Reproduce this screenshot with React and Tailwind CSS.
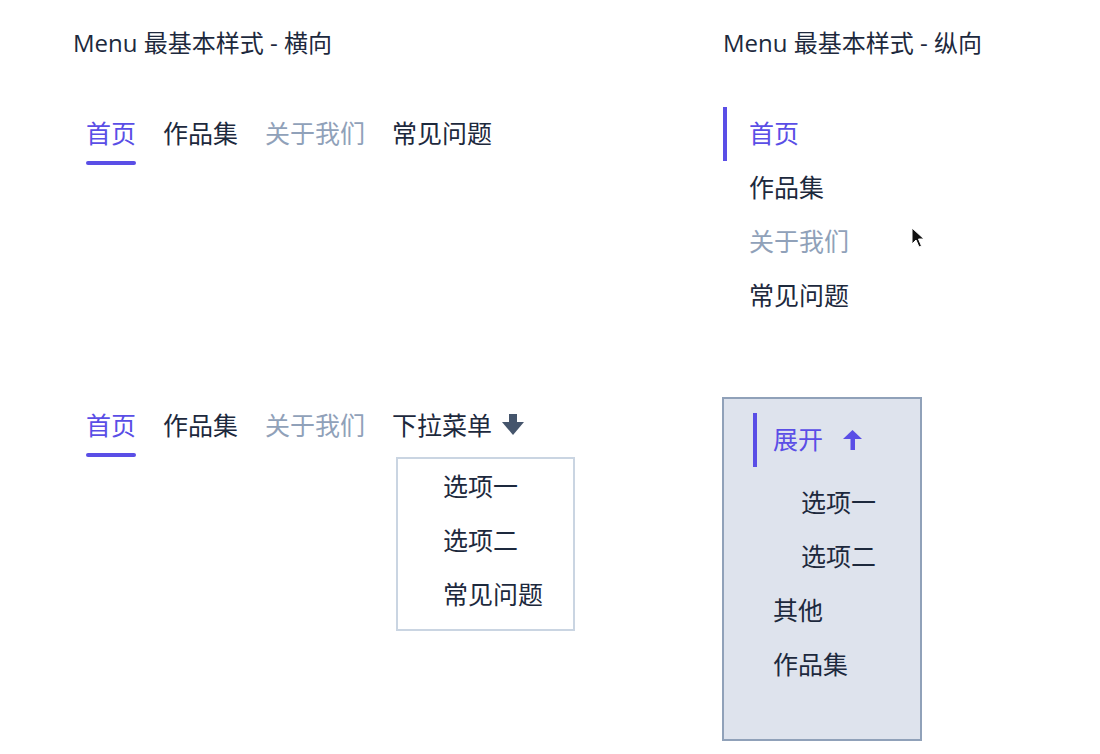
import React from 'react';

const FONT = { fontFamily: 'Lato, "Noto Sans CJK SC", sans-serif' };
const TITLE_FONT = { fontFamily: '"Open Sans", "Noto Sans CJK SC", sans-serif' };

const items = [
  { label: '首页', active: true },
  { label: '作品集' },
  { label: '关于我们', disabled: true },
];

const ArrowDown = () => (
  <svg width="22" height="22" viewBox="0 0 22 22" className="text-slate-600">
    <rect x="7" y="0" width="8" height="10" fill="currentColor" />
    <polygon points="0,8 22,8 11,21" fill="currentColor" />
  </svg>
);

const ArrowUp = () => (
  <svg width="19" height="20" viewBox="0 0 19 20" className="text-[#5a4ee6]">
    <polygon points="9.5,0 19,9 0,9" fill="currentColor" />
    <rect x="7.5" y="8" width="4.5" height="12" fill="currentColor" />
  </svg>
);

const Cursor = () => (
  <svg width="16" height="22" viewBox="0 0 16 22" className="absolute left-[911px] top-[227px]">
    <path d="M1 1 L1 17 L5 13 L8 20 L10.5 19 L7.5 12 L13 12 Z" fill="#111" stroke="#fff" strokeWidth="1" />
  </svg>
);

// 가로 메뉴 항목
const HItem = ({ label, active, disabled, children }) => (
  <div className="relative flex flex-col">
    <div
      className={`flex items-center pt-[10px] pb-3 text-[25px] leading-[32px] ${
        active ? 'text-[#5a4ee6]' : disabled ? 'text-slate-400' : 'text-slate-800'
      }`}
    >
      {label}
      {children}
    </div>
    <span className={`h-1 rounded-full ${active ? 'bg-[#5a4ee6]' : 'bg-transparent'}`}></span>
  </div>
);

// 세로 메뉴 항목
const VItem = ({ label, active, disabled }) => (
  <div
    className={`h-[54px] flex items-center pl-[22px] border-l-4 text-[25px] ${
      active
        ? 'border-[#5a4ee6] text-[#5a4ee6]'
        : disabled
        ? 'border-transparent text-slate-400'
        : 'border-transparent text-slate-800'
    }`}
  >
    {label}
  </div>
);

const App = () => {
  return (
    <div className="relative w-[1100px] h-[754px] bg-white overflow-hidden pl-[73px] pt-[29px]" style={FONT}>
      {/* 상단: 기본 스타일 */}
      <div className="flex">
        <div className="w-[650px]">
          <h2 className="text-[24px] leading-[28px] text-slate-800" style={TITLE_FONT}>
            Menu 最基本样式 - 横向
          </h2>
          <div className="flex gap-[27px] mt-[50px] ml-[13px]">
            {items.map((it) => (
              <HItem key={it.label} {...it} />
            ))}
            <HItem label="常见问题" />
          </div>
        </div>
        <div>
          <h2 className="text-[24px] leading-[28px] text-slate-800" style={TITLE_FONT}>
            Menu 最基本样式 - 纵向
          </h2>
          <div className="mt-[50px] flex flex-col">
            {items.map((it) => (
              <VItem key={it.label} {...it} />
            ))}
            <VItem label="常见问题" />
          </div>
        </div>
      </div>

      {/* 하단: 드롭다운 / 펼침 */}
      <div className="flex mt-[74px]">
        <div className="w-[650px]">
          <div className="flex gap-[27px] mt-[2px] ml-[13px]">
            {items.map((it) => (
              <HItem key={it.label} {...it} />
            ))}
            <div className="relative">
              <HItem label="下拉菜单">
                <span className="ml-[10px]">
                  <ArrowDown />
                </span>
              </HItem>
              <div className="absolute left-[4px] top-full w-[179px] border-2 border-slate-300 bg-white pt-px pb-[7px]">
                {['选项一', '选项二', '常见问题'].map((t) => (
                  <div key={t} className="h-[54px] flex items-center pl-[45px] text-[25px] text-slate-800">
                    {t}
                  </div>
                ))}
              </div>
            </div>
          </div>
        </div>
        <div className="-ml-px w-[200px] h-[344px] border-2 border-slate-400 bg-[#dee3ed] pt-[14px] pl-[29px]">
          <div className="h-[54px] flex items-center pl-4 border-l-4 border-[#5a4ee6] text-[25px] text-[#5a4ee6]">
            展开
            <span className="ml-[20px]">
              <ArrowUp />
            </span>
          </div>
          <div className="mt-[9px]">
            {['选项一', '选项二'].map((t) => (
              <div key={t} className="h-[54px] flex items-center pl-[48px] text-[25px] text-slate-800">
                {t}
              </div>
            ))}
          </div>
          {['其他', '作品集'].map((t) => (
            <div key={t} className="h-[54px] flex items-center pl-5 text-[25px] text-slate-800">
              {t}
            </div>
          ))}
        </div>
      </div>

      <Cursor />
    </div>
  );
};

export default App;
